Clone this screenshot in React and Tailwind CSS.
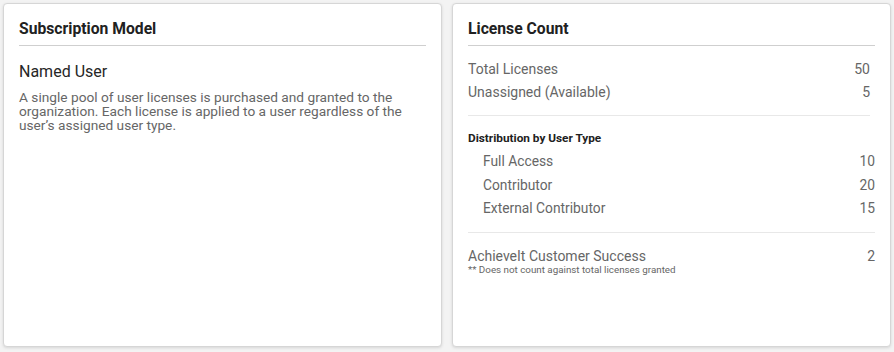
const rows = [
  { label: "Total Licenses", value: 50 },
  { label: "Unassigned (Available)", value: 5 },
];

const byType = [
  { label: "Full Access", value: 10 },
  { label: "Contributor", value: 20 },
  { label: "External Contributor", value: 15 },
];

function Card({ title, children }) {
  return (
    <div className="flex-1 h-[344px] bg-white rounded-[4px] border border-[#d6d6d6] shadow-[0_1px_3px_rgba(0,0,0,0.12)] px-[15px] pt-4">
      <h2 className="text-[15.7px] leading-[18px] font-bold text-[#212121] pb-[7px] border-b border-[#cfcfcf]">
        {title}
      </h2>
      {children}
    </div>
  );
}

export default function App() {
  return (
    <div className="w-[894px] h-[352px] bg-[#f3f3f3] p-[3px] flex gap-[10px] font-['Roboto',_'Liberation_Sans',_sans-serif]">
      <Card title="Subscription Model">
        <div className="mt-4 text-[16px] leading-[20px] text-[#262626]">Named User</div>
        <p className="mt-[8px] text-[13.7px] leading-[14px] text-[#666] pr-4">
          A single pool of user licenses is purchased and granted to the
          organization. Each license is applied to a user regardless of the
          user’s assigned user type.
        </p>
      </Card>

      <Card title="License Count">
        <div className="mt-[12px] mr-[5px] pb-[11px] border-b border-[#e8e8e8] text-[14px] text-[#666]">
          {rows.map((r) => (
            <div key={r.label} className="flex justify-between leading-[23px]">
              <span>{r.label}</span>
              <span>{r.value}</span>
            </div>
          ))}
        </div>

        <div className="mt-[14px] text-[11.8px] leading-[16px] font-bold text-[#212121]">
          Distribution by User Type
        </div>
        <div className="mt-[4px] pb-[11px] border-b border-[#e8e8e8] text-[13.8px] text-[#666]">
          {byType.map((r) => (
            <div key={r.label} className="flex justify-between leading-[23.5px] pl-[15px]">
              <span>{r.label}</span>
              <span>{r.value}</span>
            </div>
          ))}
        </div>

        <div className="mt-[15px] flex justify-between text-[14px] leading-[16px] text-[#666]">
          <span>AchieveIt Customer Success</span>
          <span>2</span>
        </div>
        <div className="text-[9.8px] leading-[11px] text-[#666]">
          ** Does not count against total licenses granted
        </div>
      </Card>
    </div>
  );
}
